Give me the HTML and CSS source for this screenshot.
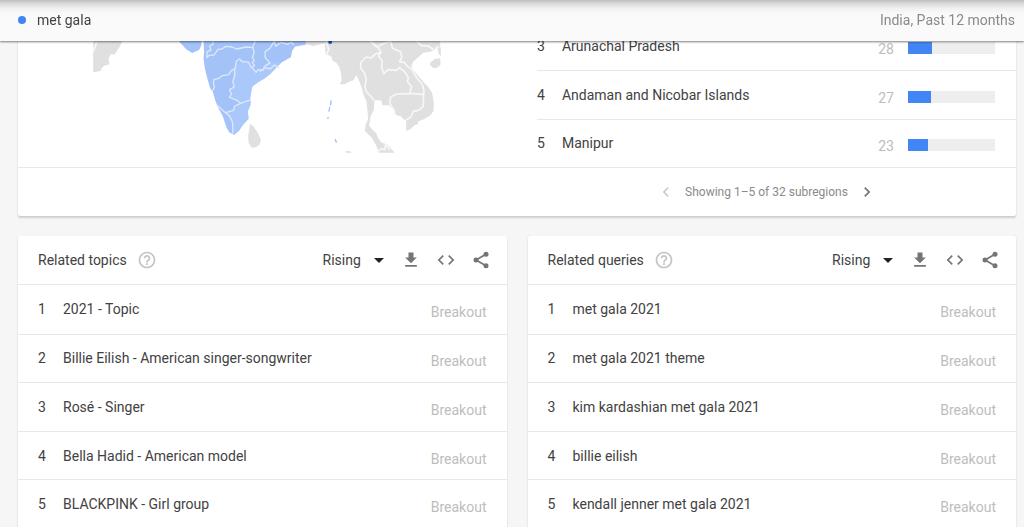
FILE: index.html
```html
<!DOCTYPE html>
<html lang="en">
<head>
<meta charset="utf-8">
<title>met gala - Explore</title>
<link rel="stylesheet" href="styles.css">
</head>
<body>
<svg class="sprite" aria-hidden="true">
  <symbol id="help" viewBox="0 0 24 24"><path d="M11 18h2v-2h-2v2zm1-16C6.480 2 2 6.480 2 12s4.480 10 10 10 10-4.480 10-10S17.520 2 12 2zm0 18c-4.410 0-8-3.590-8-8s3.590-8 8-8 8 3.590 8 8-3.590 8-8 8zm0-14c-2.210 0-4 1.790-4 4h2c0-1.100.9-2 2-2s2 .9 2 2c0 2-3 1.750-3 5h2c0-2.250 3-2.500 3-5 0-2.210-1.790-4-4-4z"/></symbol>
  <symbol id="download" viewBox="0 0 24 24"><path d="M19 9h-4V3H9v6H5l7 7 7-7zM5 18v2h14v-2H5z"/></symbol>
  <symbol id="embed" viewBox="0 0 24 24"><path d="M9.400 16.600L4.800 12l4.600-4.600L8 6l-6 6 6 6 1.400-1.400zm5.200 0l4.600-4.600-4.600-4.600L16 6l6 6-6 6-1.400-1.400z"/></symbol>
  <symbol id="share" viewBox="0 0 24 24"><path d="M6 12 18 5M6 12l12 7" fill="none" stroke="currentColor" stroke-width="2"/><circle cx="6" cy="12" r="3"/><circle cx="18" cy="5" r="3"/><circle cx="18" cy="19" r="3"/></symbol>
  <symbol id="prev" viewBox="0 0 24 24"><path d="M15.410 7.410L14 6l-6 6 6 6 1.410-1.410L10.830 12z"/></symbol>
  <symbol id="next" viewBox="0 0 24 24"><path d="M10 6L8.590 7.410 13.170 12l-4.580 4.590L10 18l6-6z"/></symbol>
</svg>

<header class="topbar">
  <span class="term"><span class="dot"></span>met gala</span>
  <span class="scope">India, Past 12 months</span>
</header>

<main class="page">
  <section class="card">
    <div class="region">
      <svg class="map" viewBox="40 -24 1043 396" role="img" aria-label="Interest by subregion">
        <g class="land">
          <path d="M40-24H150L127 34 121 48 109 66 103 74 94 72 86 84 89 103 77 106 67 112 62 123 40 127Z"/>
          <path d="M510 282 521 289 534 309 543 329 540 343 529 352 515 353 506 337 505 315 508 302Z"/>
          <path d="M660-24 678 42 700 48 735 40 737 72 754 79 758 92 770 98 778 111 784 132 785 153 779 163 795 163 804 157 821 151 829 136 839 155 847 177 851 195 860 214 863 245 865 266 857 285 855 303 865 313 876 323 888 345 898 368H945L932 354 919 342 906 338 897 328 889 310 878 299 868 287 872 260 882 239 884 211 904 211 908 226 927 226 938 235 949 255 963 259 968 265 979 272 979 303 991 298 1004 286 1015 282 1014 275 1033 267 1050 257 1061 243 1062 218 1057 188 1045 171 1031 157 1016 139 1000 120 994 108 1000 95 1016 81 1030 68 1051 65 1064 60 1070 49 1081 50V-24Z"/>
          <path d="M1052 97 1065 87 1081 85 1082 105 1069 115 1057 112 1051 104Z"/>
          <path d="M1072 52H1083V79L1077 72Z"/><path d="M797 364 809 363 816 368H799Z"/>
        </g>
        <path class="india" d="M290-24H365V44L358 60 337 69 319 58 300 37Z"/>
        <path class="india" d="M367-24H678V44L660 47 645 50 637 63 633 82 606 97 588 111 571 132 552 147 534 157 518 169 511 180 511 205 513 223 504 244 506 267 493 274 487 288 478 302 463 314 448 307 439 290 429 259 414 231 406 210 399 187 391 175 383 147 376 119 371 87 373 65Z"/>
        <g class="india-light">
          <path d="M487 87 505 96 512 112 530 127 550 120 571 99 606 97 571 132 518 169 511 205 483 218 470 207 451 201 449 181 458 172 461 115Z"/>
          <path d="M438 247 461 241 467 225 513 210 504 244 506 267 487 288 463 314 455 276Z"/>
        </g>
        <g class="border pale">
          <path d="M399 30 400 42 389 49 393 61 382 65 381 83 388 76 403 75 414 58 426 57 438 49 457 51 470 57 500 51 519 53 523 68 518 81 523 92 517 98 524 107 516 112 529 127 535 119 550 120 554 109 571 99"/>
          <path d="M514 112 506 96 487 95 479 87 470 93 466 116 454 122 447 134 427 137 417 145 402 149 401 161 404 171 397 184M464 115 465 137 459 153 463 171 449 179 455 192 449 202 467 209 477 215 483 220 465 228 461 241 437 248 410 224M483 220 500 213 513 210M437 248 449 258 458 276 459 310"/>
          <path d="M519 51 527 31M571 99 556 83 556 65 570 55 583 35 588 49 604 37 623 43 634 37 642 44M571 99 558 105M540 125 555 113 571 117 584 105 598 114"/>
        </g>
        <g class="border">
          <path d="M873 35 895 52 903 67 887 72 873 84 859 81 844 96 842 113 856 132 859 152 855 168 859 184 873 199 883 211M872 35 890 51 910 41 932 34M903 67 896 78 907 92 905 113 912 131 925 119 950 121 958 113 974 124 985 142 983 156 995 169 990 190 951 192 932 201 930 221 944 242 944 256M932 30 938 55 962 65 966 83 959 95 974 98 983 109 996 118 1011 144 1027 163 1032 179 1030 230 1016 241 1000 244 993 261 979 270M990 190 1030 193M895 362 906 356 915 360 917 344 930 360M738 34 747 58 740 73"/>
          <path d="M1008 30 1024 47 1045 48 1063 60"/><path d="M40 66 51 36"/>
        </g>
        <g class="isles">
          <path d="M754 211 752 226M750 231 747 245M745 261 744 267M766 327 770 338"/>
        </g>
        <circle class="hot" cx="751" cy="36" r="6"/>
      </svg>
      <ol class="rows regions">
        <li><span class="rank">3</span><span class="name">Arunachal Pradesh</span><span class="value">28</span><span class="bar"><span class="fill" style="width:28%"></span></span></li>
        <li><span class="rank">4</span><span class="name">Andaman and Nicobar Islands</span><span class="value">27</span><span class="bar"><span class="fill" style="width:27%"></span></span></li>
        <li><span class="rank">5</span><span class="name">Manipur</span><span class="value">23</span><span class="bar"><span class="fill" style="width:23%"></span></span></li>
      </ol>
    </div>
    <footer class="pager-bar">
      <nav class="pager" aria-label="Subregions">
        <button type="button" aria-label="Previous" disabled><svg><use href="#prev"/></svg></button>
        <span>Showing 1–5 of 32 subregions</span>
        <button type="button" aria-label="Next"><svg><use href="#next"/></svg></button>
      </nav>
    </footer>
  </section>

  <div class="pair">
    <section class="card">
      <header class="card-head">
        <h2>Related topics</h2>
        <button type="button" class="help" aria-label="Help"><svg><use href="#help"/></svg></button>
        <span class="sort"><select aria-label="Sort topics"><option>Rising</option><option>Top</option></select></span>
        <button type="button" aria-label="Download"><svg><use href="#download"/></svg></button>
        <button type="button" aria-label="Embed"><svg><use href="#embed"/></svg></button>
        <button type="button" aria-label="Share"><svg><use href="#share"/></svg></button>
      </header>
      <ol class="rows related">
        <li><span class="rank">1</span><span class="name">2021 - Topic</span><span class="value">Breakout</span></li>
        <li><span class="rank">2</span><span class="name">Billie Eilish - American singer-songwriter</span><span class="value">Breakout</span></li>
        <li><span class="rank">3</span><span class="name">Rosé - Singer</span><span class="value">Breakout</span></li>
        <li><span class="rank">4</span><span class="name">Bella Hadid - American model</span><span class="value">Breakout</span></li>
        <li><span class="rank">5</span><span class="name">BLACKPINK - Girl group</span><span class="value">Breakout</span></li>
      </ol>
    </section>
    <section class="card">
      <header class="card-head">
        <h2>Related queries</h2>
        <button type="button" class="help" aria-label="Help"><svg><use href="#help"/></svg></button>
        <span class="sort"><select aria-label="Sort queries"><option>Rising</option><option>Top</option></select></span>
        <button type="button" aria-label="Download"><svg><use href="#download"/></svg></button>
        <button type="button" aria-label="Embed"><svg><use href="#embed"/></svg></button>
        <button type="button" aria-label="Share"><svg><use href="#share"/></svg></button>
      </header>
      <ol class="rows related">
        <li><span class="rank">1</span><span class="name">met gala 2021</span><span class="value">Breakout</span></li>
        <li><span class="rank">2</span><span class="name">met gala 2021 theme</span><span class="value">Breakout</span></li>
        <li><span class="rank">3</span><span class="name">kim kardashian met gala 2021</span><span class="value">Breakout</span></li>
        <li><span class="rank">4</span><span class="name">billie eilish</span><span class="value">Breakout</span></li>
        <li><span class="rank">5</span><span class="name">kendall jenner met gala 2021</span><span class="value">Breakout</span></li>
      </ol>
    </section>
  </div>
</main>
</body>
</html>
```
FILE: styles.css
```css
* { box-sizing: border-box; }
html { scrollbar-width: none; }
body {
  margin: 0;
  background: #f6f6f6;
  color: #424242;
  font: 14px/20px Roboto, "Liberation Sans", sans-serif;
}
.sprite { position: absolute; width: 0; height: 0; }
button {
  display: flex;
  padding: 0;
  border: 0;
  background: none;
  color: #757575;
}
button svg { width: 20px; height: 20px; fill: currentColor; }

.topbar {
  position: fixed;
  z-index: 2;
  inset: 0 0 auto;
  display: flex;
  align-items: center;
  justify-content: space-between;
  height: 41px;
  padding: 0 9px 1px 18px;
  background: linear-gradient(#bebebe, #dcdcdc 4px, #f2f2f2 9px, #fafafa 14px);
  box-shadow: 0 1px 2px rgba(0, 0, 0, .5);
}
.term { display: flex; align-items: center; gap: 11px; }
.dot { width: 8px; height: 8px; border-radius: 50%; background: #4285f4; }
.scope { color: #8a8a8a; }

.page { padding: 22px 8px 0 18px; }
.card {
  background: #fff;
  border-radius: 2px;
  box-shadow: 0 2px 2px rgba(0, 0, 0, .16), 0 0 1px rgba(0, 0, 0, .1);
}

.region { display: grid; grid-template-columns: 52% 48%; }
.map { display: block; width: 348px; height: 132px; margin-left: 75px; }
.land { fill: #e0e0e0; }
.india { fill: #a3c2f8; }
.india-light { fill: #aac8fa; }
.border { fill: none; stroke: #f7f7f7; stroke-width: 5; stroke-linejoin: round; }
.pale { stroke: #dce8fc; stroke-width: 4; }
.isles { fill: none; stroke: #9cc2fa; stroke-width: 4; }
.hot { fill: #1257cc; }

.rows { display: grid; grid-auto-rows: 1fr; margin: 0; padding: 0; list-style: none; }
.rows li { display: flex; align-items: center; border-top: 1px solid #e8e8e8; }
.rows li:first-child { border-top: 0; }
.rank { width: 25px; }
.name { flex: 1; }
.value { padding-top: 6px; color: #bdbdbd; }
.regions { height: 145px; }
.regions li { padding-right: 21px; }
.regions .value { margin-right: 14px; }
.bar { width: 87px; height: 12px; margin-top: 4px; background: #eee; }
.fill { display: block; height: 100%; background: #4285f4; }
.related { height: 243px; }
.related li { padding: 0 20px; }

.pager-bar { border-top: 1px solid #e8e8e8; }
.pager {
  display: flex;
  align-items: center;
  justify-content: center;
  gap: 9px;
  width: 50%;
  height: 48px;
  margin-left: auto;
  color: #8a8a8a;
  font-size: 12px;
}
.pager button:disabled { color: #ccc; }

.pair {
  display: grid;
  grid-template-columns: 1fr 1fr;
  gap: 21px;
  padding-top: 20px;
}
.card-head {
  display: flex;
  align-items: center;
  gap: 15px;
  height: 49px;
  padding: 0 16px 0 20px;
  border-bottom: 1px solid #e8e8e8;
}
.card-head h2 { margin: 0; font-size: 14px; font-weight: 400; }
.card-head .help { margin: 0 auto 0 -5px; color: #c4c4c4; }
.card-head svg { width: 20px; height: 20px; }
.sort { display: flex; align-items: center; padding-right: 2px; }
.sort::after {
  content: "";
  margin-left: -9px;
  border: 5px solid transparent;
  border-top-color: #212121;
  border-bottom: 0;
  pointer-events: none;
}
.sort select {
  width: 60px;
  padding: 0;
  border: 0;
  appearance: none;
  background: none;
  color: inherit;
  font: inherit;
}
```
